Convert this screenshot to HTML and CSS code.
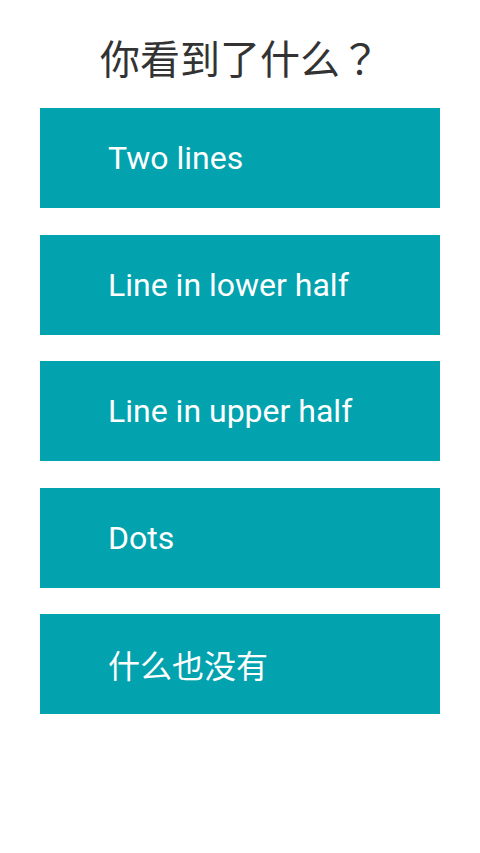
FILE: index.html
```html
<!DOCTYPE html>
<html lang="zh">
<head>
  <meta charset="UTF-8">
  <meta name="viewport" content="width=device-width, initial-scale=1.0">
  <title>你看到了什么？</title>
  <link rel="stylesheet" href="styles.css">
</head>
<body>

<div class="container">
  <h2 class="question">你看到了什么<span class="mark" lang="zh-Hant">？</span></h2>
  <div class="answers">
    <button class="btn">Two lines</button>
    <button class="btn">Line in lower half</button>
    <button class="btn">Line in upper half</button>
    <button class="btn">Dots</button>
    <button class="btn">什么也没有</button>
  </div>
</div>

</body>
</html>
```

FILE: styles.css
```css
body {
  margin: 0;
  background-color: #fff;
  font-family: Roboto, "Noto Sans CJK SC", sans-serif;
}
.container {
  padding: 0 40px;
}
.question {
  margin: 0;
  padding: 34px 0 0 60px;
  height: 108px;
  box-sizing: border-box;
  font-family: "Noto Sans CJK SC", sans-serif;
  font-size: 40px;
  font-weight: normal;
  line-height: 46px;
  color: #333;
}
.question .mark {
  font-family: "Noto Sans CJK TC", sans-serif;
}
.answers {
  display: flex;
  flex-direction: column;
  gap: 26.5px;
}
.btn {
  display: flex;
  align-items: center;
  width: 100%;
  height: 100px;
  padding: 0 0 0 68px;
  color: #fff;
  background-color: #02a3ae;
  border: none;
  border-radius: 0;
  font-family: Roboto, "Noto Sans CJK SC", sans-serif;
  font-size: 32px;
  text-align: left;
}
```
